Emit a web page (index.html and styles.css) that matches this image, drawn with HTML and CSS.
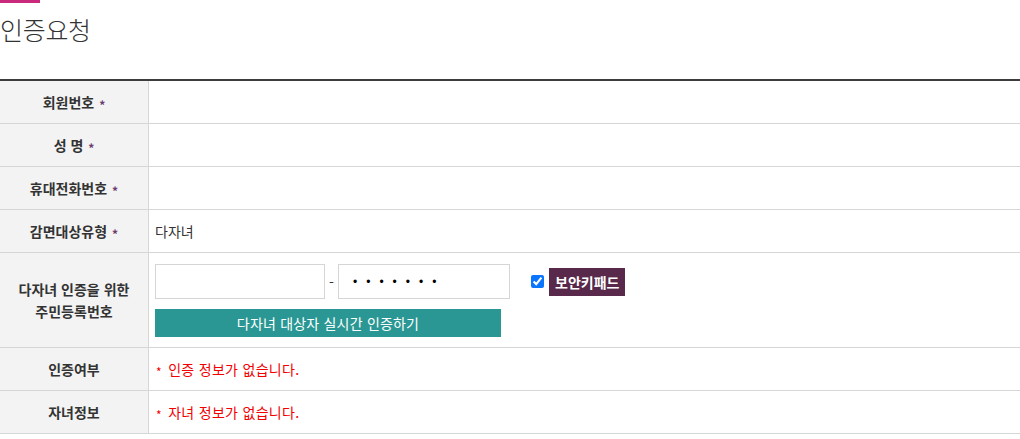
FILE: index.html
```html
<!DOCTYPE html>
<html lang="ko">
<head>
    <meta charset="UTF-8">
    <title>인증요청</title>
    <link rel="stylesheet" href="styles.css">
</head>
<body>
    <div class="title-wrap">
        <div class="title-bar"></div>
        <h2 class="title">인증요청</h2>
    </div>
    <table class="form-table">
        <tr>
            <th>회원번호 <span class="req">*</span></th>
            <td></td>
        </tr>
        <tr>
            <th>성 명 <span class="req">*</span></th>
            <td></td>
        </tr>
        <tr>
            <th>휴대전화번호 <span class="req">*</span></th>
            <td></td>
        </tr>
        <tr>
            <th>감면대상유형 <span class="req">*</span></th>
            <td>다자녀</td>
        </tr>
        <tr class="tall">
            <th>다자녀 인증을 위한<br>주민등록번호</th>
            <td>
                <div class="jumin">
                    <input type="text" class="inp">
                    <span class="dash">-</span>
                    <input type="password" class="inp pw" value="1234567">
                    <label class="keypad">
                        <input type="checkbox" checked>
                        <span class="keypad-btn">보안키패드</span>
                    </label>
                </div>
                <button class="auth-btn">다자녀 대상자 실시간 인증하기</button>
            </td>
        </tr>
        <tr>
            <th>인증여부</th>
            <td class="warn"><span class="star">*</span> 인증 정보가 없습니다.</td>
        </tr>
        <tr>
            <th>자녀정보</th>
            <td class="warn"><span class="star">*</span> 자녀 정보가 없습니다.</td>
        </tr>
    </table>
</body>
</html>
```

FILE: styles.css
```css
body{
    margin: 0;
    font-family: "Noto Sans CJK KR", "Noto Sans", sans-serif;
    color: #333;
}
.title-wrap{
    height: 79px;
}
.title-bar{
    width: 40px;
    height: 3px;
    background-color: #c8297a;
}
.title{
    margin: 0;
    padding-top: 8px;
    font-size: 25px;
    font-weight: 300;
    line-height: 36px;
    color: #333;
    letter-spacing: -0.3px;
}
.form-table{
    width: 100%;
    border-collapse: collapse;
    border-top: 2px solid #3c3c3c;
    font-size: 14px;
}
.form-table th{
    width: 148px;
    height: 42px;
    padding: 0;
    background-color: #f3f3f3;
    border-bottom: 1px solid #d6d6d6;
    border-right: 1px solid #d6d6d6;
    font-weight: bold;
    color: #333;
    text-align: center;
    line-height: 22px;
}
.form-table td{
    height: 42px;
    padding: 0 6px;
    border-bottom: 1px solid #d6d6d6;
    color: #333;
}
.form-table .tall th,
.form-table .tall td{
    height: 94px;
}
.req{
    color: #6c3a6e;
    font-size: 12px;
    position: relative;
    top: 2px;
    margin-left: 1px;
}
.star{
    font-size: 12px;
    position: relative;
    top: 2px;
    margin-left: 1px;
    margin-right: 2px;
}
.jumin{
    display: flex;
    align-items: center;
    margin-top: 1px;
}
.inp{
    width: 170px;
    height: 35px;
    box-sizing: border-box;
    border: 1px solid #d5d5d5;
    outline: none;
    padding: 0 14px;
    font-size: 13px;
    margin: 0;
}
.pw{
    width: 172px;
    letter-spacing: 9px;
    font-size: 12px;
}
.dash{
    width: 13px;
    text-align: center;
}
.keypad{
    display: flex;
    align-items: center;
    margin-left: 18px;
}
.keypad input{
    width: 13px;
    height: 13px;
    margin: 0 5px 0 3px;
    accent-color: #0a75ff;
}
.keypad-btn{
    background-color: #58294a;
    color: #fff;
    font-weight: bold;
    font-size: 14px;
    height: 28px;
    line-height: 28px;
    padding: 0 6px;
}
.auth-btn{
    display: block;
    width: 346px;
    height: 28px;
    margin-top: 10px;
    border: none;
    background-color: #2a9794;
    color: #fff;
    font-family: "Noto Sans CJK KR", sans-serif;
    font-size: 14px;
    letter-spacing: 0.2px;
    padding: 0;
}
.warn{
    color: #f20000 !important;
    letter-spacing: 0.3px;
}
```
